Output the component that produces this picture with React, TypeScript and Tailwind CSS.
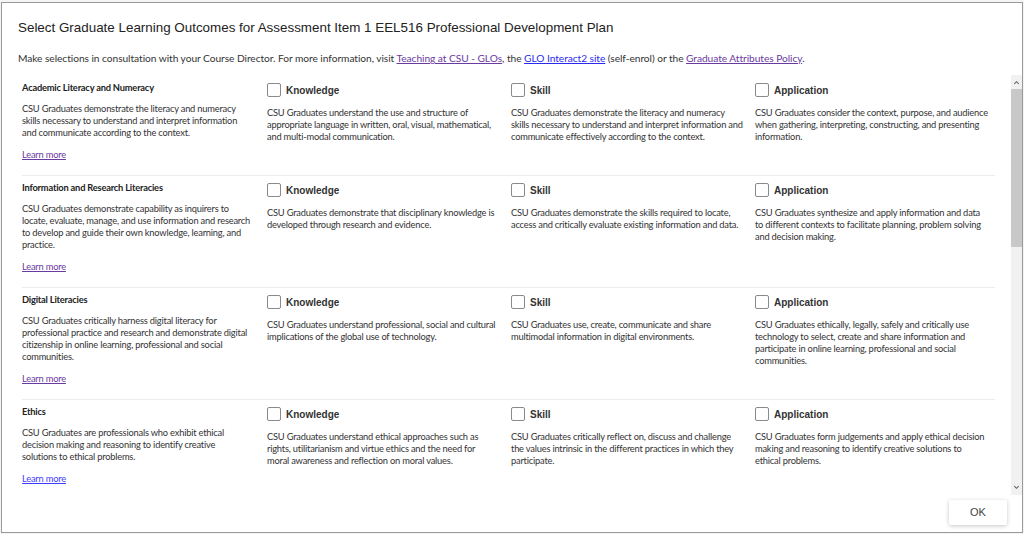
import React from "react";

type Glo = {
  title: string;
  desc: string;
  knowledge: string;
  skill: string;
  application: string;
  visited: boolean;
};

const glos: Glo[] = [
  {
    title: "Academic Literacy and Numeracy",
    desc: "CSU Graduates demonstrate the literacy and numeracy skills necessary to understand and interpret information and communicate according to the context.",
    knowledge:
      "CSU Graduates understand the use and structure of appropriate language in written, oral, visual, mathematical, and multi-modal communication.",
    skill:
      "CSU Graduates demonstrate the literacy and numeracy skills necessary to understand and interpret information and communicate effectively according to the context.",
    application:
      "CSU Graduates consider the context, purpose, and audience when gathering, interpreting, constructing, and presenting information.",
    visited: true,
  },
  {
    title: "Information and Research Literacies",
    desc: "CSU Graduates demonstrate capability as inquirers to locate, evaluate, manage, and use information and research to develop and guide their own knowledge, learning, and practice.",
    knowledge:
      "CSU Graduates demonstrate that disciplinary knowledge is developed through research and evidence.",
    skill:
      "CSU Graduates demonstrate the skills required to locate, access and critically evaluate existing information and data.",
    application:
      "CSU Graduates synthesize and apply information and data to different contexts to facilitate planning, problem solving and decision making.",
    visited: true,
  },
  {
    title: "Digital Literacies",
    desc: "CSU Graduates critically harness digital literacy for professional practice and research and demonstrate digital citizenship in online learning, professional and social communities.",
    knowledge:
      "CSU Graduates understand professional, social and cultural implications of the global use of technology.",
    skill:
      "CSU Graduates use, create, communicate and share multimodal information in digital environments.",
    application:
      "CSU Graduates ethically, legally, safely and critically use technology to select, create and share information and participate in online learning, professional and social communities.",
    visited: true,
  },
  {
    title: "Ethics",
    desc: "CSU Graduates are professionals who exhibit ethical decision making and reasoning to identify creative solutions to ethical problems.",
    knowledge:
      "CSU Graduates understand ethical approaches such as rights, utilitarianism and virtue ethics and the need for moral awareness and reflection on moral values.",
    skill:
      "CSU Graduates critically reflect on, discuss and challenge the values intrinsic in the different practices in which they participate.",
    application:
      "CSU Graduates form judgements and apply ethical decision making and reasoning to identify creative solutions to ethical problems.",
    visited: false,
  },
];

const Option = ({ label, text, last }: { label: string; text: string; last?: boolean }) => (
  <div className={`pt-[1px] ${last ? "pr-[6px]" : "pr-[12px]"}`}>
    <label className="flex items-center gap-[5px] h-[14px]">
      <span className="w-[14px] h-[14px] border border-[#8a8a8a] rounded-[2px] bg-white shrink-0" />
      <span className="font-['Liberation_Sans',Arial,sans-serif] font-bold text-[10px] tracking-normal text-[#333]">
        {label}
      </span>
    </label>
    <p className="mt-[10px] text-[9.3px] leading-[12px] tracking-[-0.2px] text-[#333]">{text}</p>
  </div>
);

const Row = ({ glo, first }: { glo: Glo; first: boolean }) => (
  <div
    className={`grid grid-cols-[245px_244px_244px_1fr] pt-[6px] pb-[11px] ${
      first ? "" : "border-t border-[#ececec]"
    }`}
  >
    <div className="pr-[16px]">
      <h3 className="font-bold text-[9.3px] leading-[12px] tracking-[-0.2px] text-[#222]">{glo.title}</h3>
      <p className="mt-[9px] text-[9.3px] leading-[12px] tracking-[-0.2px] text-[#333]">{glo.desc}</p>
      <a
        href="#"
        className={`inline-block mt-[10px] text-[9.3px] leading-[12px] tracking-[-0.2px] underline ${
          glo.visited ? "text-[#6a3aa0]" : "text-[#3d3dff]"
        }`}
      >
        Learn more
      </a>
    </div>
    <Option label="Knowledge" text={glo.knowledge} />
    <Option label="Skill" text={glo.skill} />
    <Option label="Application" text={glo.application} last />
  </div>
);

const App = () => {
  return (
    <div className="w-[1024px] h-[534px] bg-[#f4f4f4] overflow-hidden font-['Lato','Noto_Sans',sans-serif]">
      <div className="h-[2px]" />
      <div className="h-[531px] ml-[1px] w-[1022px] bg-white border border-[#9a9a9a] flex flex-col">
        <header className="px-[16px] pt-[16px]">
          <h1 className="font-['Liberation_Sans',Arial,sans-serif] text-[13.4px] leading-[18px] text-[#222]">
            Select Graduate Learning Outcomes for Assessment Item 1 EEL516 Professional Development Plan
          </h1>
          <p className="mt-[14px] text-[10.2px] leading-[14px] tracking-[-0.05px] text-[#333]">
            Make selections in consultation with your Course Director. For more information, visit{" "}
            <a href="#" className="underline text-[#6a3aa0]">
              Teaching at CSU - GLOs
            </a>
            , the{" "}
            <a href="#" className="underline text-[#2a2aee]">
              GLO Interact2 site
            </a>{" "}
            (self-enrol) or the{" "}
            <a href="#" className="underline text-[#6a3aa0]">
              Graduate Attributes Policy
            </a>
            .
          </p>
        </header>

        <div className="mt-[10px] h-[420px] flex">
          <div className="flex-1 overflow-hidden pl-[20px] pr-[16px] pt-[1px]">
            {glos.map((g, i) => (
              <Row key={g.title} glo={g} first={i === 0} />
            ))}
          </div>
          <div className="w-[11px] bg-[#f1f1f1] flex flex-col items-center">
            <svg width="7" height="7" viewBox="0 0 8 8" className="mt-[4px] shrink-0">
              <path d="M1.5 5.5 L4 3 L6.5 5.5" stroke="#606060" strokeWidth="1.2" fill="none" />
            </svg>
            <div className="mt-[3px] w-full h-[158px] bg-[#c8c8c8]" />
            <div className="flex-1" />
            <svg width="7" height="7" viewBox="0 0 8 8" className="mb-[4px] shrink-0">
              <path d="M1.5 2.5 L4 5 L6.5 2.5" stroke="#606060" strokeWidth="1.2" fill="none" />
            </svg>
          </div>
        </div>

        <footer className="flex-1 flex justify-end items-start pr-[15px] pt-[5px]">
          <button className="w-[58px] h-[25px] bg-white shadow-[0_1px_4px_rgba(0,0,0,0.22)] rounded-[2px] font-['Liberation_Sans',Arial,sans-serif] text-[11px] text-[#444]">
            OK
          </button>
        </footer>
      </div>
    </div>
  );
};

export default App;
